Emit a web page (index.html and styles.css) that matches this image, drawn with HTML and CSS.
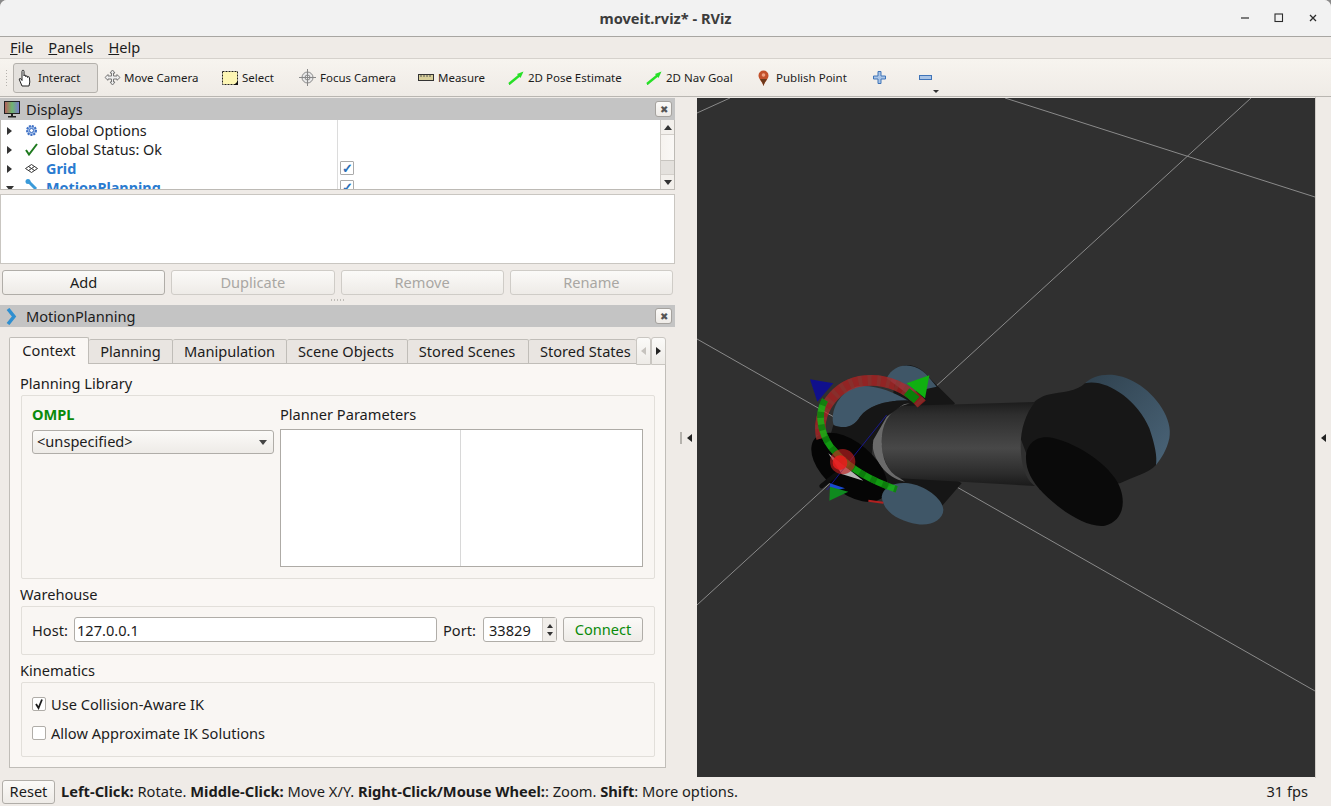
FILE: index.html
```html
<!DOCTYPE html>
<html lang="en">
<head>
<meta charset="utf-8">
<title>moveit.rviz* - RViz</title>
<link rel="stylesheet" href="styles.css">
</head>
<body>
<div class="window">
  <header class="titlebar">
    <div class="title">moveit.rviz* - RViz</div>
    <div class="winctl">
      <svg width="10" height="10" viewBox="0 0 10 10"><path d="M1 5h8" stroke="#2c2c2c" stroke-width="1.200"/></svg>
      <svg width="10" height="10" viewBox="0 0 10 10"><rect x="1" y="1" width="7.500" height="7.500" fill="none" stroke="#2c2c2c" stroke-width="1.100"/></svg>
      <svg width="10" height="10" viewBox="0 0 10 10"><path d="M2 2l6 6M8 2l-6 6" stroke="#2c2c2c" stroke-width="1.300"/></svg>
    </div>
  </header>
  <nav class="menubar">
    <span><u>F</u>ile</span><span><u>P</u>anels</span><span><u>H</u>elp</span>
  </nav>
  <div class="toolbar">
    <div class="grip"></div>
    <div class="tool active">
      <svg width="17" height="18" viewBox="0 0 17 18"><path d="M4 17l-2.500-6c-.8-1.500.6-2 1.500-1l1 1.500V2.500c0-1.800 2-1.800 2 0V7c0-1.300 1.800-1.300 1.800 0v.8c0-1.200 1.800-1.200 1.800 0v.7c0-1.100 1.800-1.100 1.800 0l.4 4.500-.8 4z" fill="#fff" stroke="#222" stroke-width="1"/></svg>
      <span>Interact</span>
    </div>
    <div class="tool tool-move">
      <svg width="17" height="17" viewBox="0 0 17 17"><path d="M8.500 1l2.500 3H9.500v3H13V5.500l3 3-3 2.800V10H9.500v3H11l-2.500 3L6 13h1.500v-3H4v1.300L1 8.500l3-3V7h3.500V4H6z" fill="#eee" stroke="#777" stroke-width="1"/></svg>
      <span>Move Camera</span>
    </div>
    <div class="tool tool-select">
      <svg width="16" height="14" viewBox="0 0 16 14"><rect x=".5" y=".5" width="15" height="13" fill="#fdf6b4" stroke="#222" stroke-dasharray="2 1"/><path d="M16 14h-4l4-4z" fill="#111"/></svg>
      <span>Select</span>
    </div>
    <div class="tool tool-focus">
      <svg width="17" height="17" viewBox="0 0 17 17"><circle cx="8.500" cy="8.500" r="5.500" fill="#e8e8e8" stroke="#888"/><circle cx="8.500" cy="8.500" r="2.500" fill="none" stroke="#888"/><path d="M8.500 0v17M0 8.500h17" stroke="#888"/></svg>
      <span>Focus Camera</span>
    </div>
    <div class="tool tool-measure">
      <svg width="16" height="7" viewBox="0 0 16 7"><rect x=".5" y=".5" width="15" height="6" fill="#d8cf9a" stroke="#333"/><path d="M3 1v2M6 1v2M9 1v2M12 1v2" stroke="#555"/></svg>
      <span>Measure</span>
    </div>
    <div class="tool tool-pose">
      <svg width="16" height="14" viewBox="0 0 16 14"><path d="M1 13.500L14 2" stroke="#0a8a0a" stroke-width="1"/><path d="M1 13L12 4" stroke="#27e027" stroke-width="2.400"/><path d="M15.500 .5L9 3l3.500 4z" fill="#27e027"/></svg>
      <span>2D Pose Estimate</span>
    </div>
    <div class="tool tool-nav">
      <svg width="16" height="14" viewBox="0 0 16 14"><path d="M1 13.500L14 2" stroke="#0a8a0a" stroke-width="1"/><path d="M1 13L12 4" stroke="#27e027" stroke-width="2.400"/><path d="M15.500 .5L9 3l3.500 4z" fill="#27e027"/></svg>
      <span>2D Nav Goal</span>
    </div>
    <div class="tool tool-pin">
      <svg width="11" height="16" viewBox="0 0 11 16"><path d="M5.500 16C4 11 .5 9 .5 5.500a5 5 0 0 1 10 0C10.500 9 7 11 5.500 16z" fill="#c3502a"/><path d="M5.500 16C4.500 12 3 11 2 9h7c-1 2-2.500 3-3.500 7z" fill="#6b3a1d"/><circle cx="5.500" cy="5" r="1.800" fill="#f0a080"/></svg>
      <span>Publish Point</span>
    </div>
    <div class="tool tool-plus">
      <svg width="13" height="13" viewBox="0 0 13 13"><path d="M5 .5h3V5h4.500v3H8v4.500H5V8H.5V5H5z" fill="#a9c4e6" stroke="#3f74b8"/></svg>
    </div>
    <div class="tool tool-minus">
      <svg width="13" height="6" viewBox="0 0 13 6"><rect x=".5" y=".5" width="12" height="4" fill="#a9c4e6" stroke="#3f74b8"/></svg>
      <i class="more"></i>
    </div>
  </div>

  <main class="main">
    <section class="dock">
      <div class="panel-head displays-head">
        <svg class="head-icon" width="16" height="17" viewBox="0 0 16 17"><defs><linearGradient id="mon"><stop offset="0" stop-color="#b85a5a"/><stop offset=".5" stop-color="#6fb56f"/><stop offset="1" stop-color="#7a7ad0"/></linearGradient></defs><rect x=".5" y=".5" width="15" height="12" fill="url(#mon)" stroke="#222"/><path d="M7 13h2v2H7zM4 15h8v1.500H4z" fill="#222"/></svg>
        <span class="grow">Displays</span>
        <button class="close-btn">✖</button>
      </div>
      <div class="tree">
        <div class="tree-col1">
          <div class="row"><i class="arrow"></i>
            <svg class="ricon" width="13" height="13" viewBox="0 0 13 13"><circle cx="6.500" cy="6.500" r="4.500" fill="#9dbbe8" stroke="#3f70c4" stroke-width="2" stroke-dasharray="2 1"/><circle cx="6.500" cy="6.500" r="2" fill="#fff" stroke="#3f70c4"/></svg>
            <span>Global Options</span></div>
          <div class="row"><i class="arrow"></i>
            <svg class="ricon" width="13" height="13" viewBox="0 0 13 13"><path d="M1 7l3 4.500L12 1" fill="none" stroke="#1f7a1f" stroke-width="2"/></svg>
            <span>Global Status: Ok</span></div>
          <div class="row"><i class="arrow"></i>
            <svg class="ricon" width="13" height="9" viewBox="0 0 13 9"><path d="M6.500.5l6 4-6 4-6-4zM3.500 2.500l6 4M9.500 2.500l-6 4" fill="none" stroke="#333"/></svg>
            <b class="blue">Grid</b></div>
          <div class="row"><i class="arrow open"></i>
            <svg class="ricon r-mp" width="13" height="13" viewBox="0 0 13 13"><path d="M3 2l8 8" stroke="#3a9ad9" stroke-width="3"/><circle cx="3" cy="2.500" r="2.500" fill="#3a9ad9"/></svg>
            <b class="blue">MotionPlanning</b></div>
        </div>
        <div class="tree-col2">
          <div class="row"></div>
          <div class="row"></div>
          <div class="row"><i class="cb">✓</i></div>
          <div class="row"><i class="cb">✓</i></div>
        </div>
        <div class="vscroll">
          <i class="sb-btn"><em class="up"></em></i>
          <i class="sb-track"><u class="sb-thumb"></u></i>
          <i class="sb-btn"><em class="down"></em></i>
        </div>
      </div>
      <div class="desc"></div>
      <div class="btn-row">
        <button class="btn">Add</button>
        <button class="btn off">Duplicate</button>
        <button class="btn off">Remove</button>
        <button class="btn off">Rename</button>
      </div>
      <div class="hsplit"></div>
      <div class="panel-head mp-head">
        <svg class="head-icon" width="14" height="17" viewBox="0 0 14 17"><path d="M2 1l6 7.500L2 16" fill="none" stroke="#2f8fd0" stroke-width="3.500"/></svg>
        <span class="grow">MotionPlanning</span>
        <button class="close-btn">✖</button>
      </div>
      <div class="tabs-wrap">
        <div class="tabbar">
          <div class="tab current">Context</div>
          <div class="tab t-plan">Planning</div>
          <div class="tab t-mani">Manipulation</div>
          <div class="tab t-scene">Scene Objects</div>
          <div class="tab t-stored">Stored Scenes</div>
          <div class="tab t-states">Stored States</div>
          <div class="tab-scroll"><i class="tri-l dim"></i></div>
          <div class="tab-scroll"><i class="tri-r"></i></div>
        </div>
        <div class="pane">
          <div class="gtitle">Planning Library</div>
          <div class="gbox g-lib">
            <div class="lib-left">
              <b class="ompl">OMPL</b>
              <div class="combo"><span>&lt;unspecified&gt;</span><i class="tri-d"></i></div>
            </div>
            <div class="lib-right">
              <div class="pp">Planner Parameters</div>
              <div class="ptable"><div class="pcell"></div><div class="pcell"></div></div>
            </div>
          </div>
          <div class="gtitle">Warehouse</div>
          <div class="gbox g-ware">
            <span class="host-l">Host:</span>
            <div class="input">127.0.0.1</div>
            <span class="port-l">Port:</span>
            <div class="spin"><span class="grow">33829</span><div class="spin-btns"><i class="tri-u-s"></i><i class="tri-d-s"></i></div></div>
            <button class="btn connect">Connect</button>
          </div>
          <div class="gtitle">Kinematics</div>
          <div class="gbox g-kin">
            <label class="check"><i class="box"><svg width="12" height="12" viewBox="0 0 12 12"><path d="M3 6l2.500 4L9 1.500" fill="none" stroke="#1c1c1c" stroke-width="1.800"/></svg></i>Use Collision-Aware IK</label>
            <label class="check"><i class="box"></i>Allow Approximate IK Solutions</label>
          </div>
        </div>
      </div>
    </section>

    <div class="vsplit"><i class="dots"></i><i class="tri-l"></i></div>

    <svg class="viewport" viewBox="697 98 618 679" preserveAspectRatio="none">
      <defs>
        <linearGradient id="cyl" x1="0" y1="0" x2="0" y2="1">
          <stop offset="0" stop-color="#1c1c1c"/><stop offset=".15" stop-color="#2e2e2e"/><stop offset=".55" stop-color="#484848"/><stop offset=".85" stop-color="#2c2c2c"/><stop offset="1" stop-color="#1a1a1a"/>
        </linearGradient>
        <linearGradient id="dome" x1="0" y1="0" x2="1" y2="1">
          <stop offset="0" stop-color="#2f414e"/><stop offset="1" stop-color="#4a6478"/>
        </linearGradient>
      </defs>
      <rect x="697" y="98" width="618" height="679" fill="#303030"/>
      <g stroke="#8a8a8a" stroke-width="1" fill="none">
        <path d="M697 339L1315 691"/>
        <path d="M697 605L1251 98"/>
        <path d="M697 113L730 98"/>
        <path d="M1005 98L1315 197"/>
      </g>
      <g transform="translate(780 350) scale(.33333)">
        <path d="M350 60C380 30 420 50 445 80L525 160L400 300L545 400L480 475L300 400Z" fill="#161616"/>
        <path d="M320 85C345 35 405 35 445 80L470 110L380 130Z" fill="#3f5667"/>
        <path d="M915 100C945 70 1010 62 1070 100C1130 135 1180 210 1168 265C1160 300 1145 325 1128 345L1060 230Z" fill="url(#dome)"/>
        <path d="M720 260C725 200 750 150 800 135C850 125 890 125 915 100C975 85 1070 145 1108 235C1125 285 1132 320 1128 345C1105 370 1060 380 1020 400L780 420Z" fill="#171717"/>
        <path d="M360 168L765 156C730 200 715 260 725 330C730 365 745 395 765 408L360 385C325 370 305 320 305 275C305 225 325 185 360 168Z" fill="url(#cyl)"/>
        <path d="M390 160C330 165 280 210 277 270C275 330 320 385 375 395L360 385C320 365 305 320 305 275C305 225 325 185 365 168Z" fill="#6a6a6a"/>
        <path d="M738 325C738 285 765 258 805 262C860 268 960 320 1005 385C1040 435 1040 510 975 527C920 535 840 480 790 430C755 395 738 360 738 325Z" fill="#0a0a0a"/>
        <path d="M160 222C150 170 190 115 240 108C290 105 340 125 385 152C310 150 265 170 240 200C220 235 170 245 160 222Z" fill="#40586a"/>
        <path d="M160 225C200 240 225 225 240 200C265 170 310 150 385 152L320 200L280 270L270 360L150 260Z" fill="#161616"/>
        <ellipse cx="208" cy="352" rx="135" ry="75" transform="rotate(40 208 352)" fill="#050505"/>
        <path d="M305 440C310 410 345 395 385 400C430 405 490 445 490 480C490 510 450 530 410 522C365 515 310 490 305 440Z" fill="#3f5667"/>
        <path d="M125 408L170 372" stroke="#0e0e0e" stroke-width="14" stroke-linecap="round"/>
        <path d="M145 310L250 392L185 372Z" fill="#b5b5b5"/>
        <path d="M140 420L320 195" stroke="#1a1ac8" stroke-width="2"/>
        <path d="M265 452L310 458" stroke="#b02020" stroke-width="6"/>
        <path d="M125 265C105 190 165 100 255 92C320 85 385 115 425 162" fill="none" stroke="#c81e1e" stroke-width="32" stroke-opacity=".65"/>
        <path d="M125 265C105 190 165 100 255 92C320 85 385 115 425 162" fill="none" stroke="#7d3a34" stroke-width="32" stroke-dasharray="12 16" stroke-opacity=".5"/>
        <path d="M135 150C105 200 130 270 165 305C205 355 280 395 350 418" fill="none" stroke="#14b414" stroke-width="20" stroke-opacity=".85"/>
        <path d="M135 150C105 200 130 270 165 305C205 355 280 395 350 418" fill="none" stroke="#0a6a0a" stroke-width="20" stroke-dasharray="18 20" stroke-opacity=".6"/>
        <path d="M90 88L160 100L112 155Z" fill="#10108c"/>
        <path d="M150 400L195 415L150 425Z" fill="#1a4ad0"/>
        <path d="M448 76L380 100L435 145Z" fill="#10b010"/>
        <path d="M148 452L150 410L205 425Z" fill="#0f8a1f"/>
        <path d="M380 125L410 150" stroke="#0a800a" stroke-width="26"/>
        <circle cx="188" cy="335" r="38" fill="#c02020" fill-opacity=".65"/>
        <circle cx="180" cy="338" r="22" fill="#ea1c1c" fill-opacity=".85"/>
      </g>
    </svg>

    <div class="rsplit"><i class="tri-l"></i></div>
  </main>

  <footer class="statusbar">
    <button class="btn reset">Reset</button>
    <div class="hint grow"><b>Left-Click:</b> Rotate. <b>Middle-Click:</b> Move X/Y. <b>Right-Click/Mouse Wheel:</b>: Zoom. <b>Shift</b>: More options.</div>
    <div class="fps">31 fps</div>
  </footer>
</div>
</body>
</html>
```
FILE: styles.css
```css
* { box-sizing: border-box; }
html, body { margin: 0; height: 100%; }
body { background: #8a8a8a; overflow: hidden; font-family: "Noto Sans", sans-serif; font-size: 14.600px; color: #1c1c1c; }
i, em, u.sb-thumb { font-style: normal; display: block; }
button { font: inherit; color: inherit; padding: 0; }
.grow { flex: 1 1 0; min-width: 0; }

.window { width: 1331px; height: 806px; display: flex; flex-direction: column; background: #efebe7; border-radius: 7px 7px 0 0; overflow: hidden; }

.titlebar { height: 37px; flex: none; background: #f2f2f2; border-bottom: 1px solid #a8a6a2; display: flex; align-items: center; position: relative; }
.title { flex: 1; text-align: center; font-weight: 700; font-size: 14.600px; color: #3c3c3c; }
.winctl { position: absolute; right: 13px; top: 13px; display: flex; gap: 24px; width: 78px; }
.winctl svg { flex: none; }

.menubar { height: 22px; flex: none; display: flex; align-items: center; gap: 15px; padding: 0 0 2px 10px; background: #efebe7; border-bottom: 1px solid #d5d1cc; }

.toolbar { height: 38px; flex: none; display: flex; align-items: center; background: linear-gradient(#f7f4ef, #efebe6); border-bottom: 1px solid #b9b6b1; font-size: 11.500px; padding-left: 5px; }
.grip { width: 3px; height: 18px; margin-right: 5px; background-image: radial-gradient(#b5b2ad 1px, transparent 1px); background-size: 3px 3px; }
.tool { display: flex; align-items: center; gap: 4px; height: 30px; flex: none; position: relative; white-space: nowrap; }
.tool.active { width: 85px; gap: 3px; padding-left: 4px; background: #e4e1dd; border: 1px solid #b4b1ac; border-radius: 3px; margin-right: 6px; }
.tool-move { width: 118px; gap: 3px; }
.tool-select { width: 77px; }
.tool-focus { width: 119px; }
.tool-measure { width: 90px; }
.tool-pose { width: 138px; }
.tool-nav { width: 112px; }
.tool-pin { width: 115px; gap: 7px; }
.tool-plus { width: 46px; }
.tool-minus { width: 20px; }
.more { position: absolute; right: 0; bottom: 0; border: 3px solid transparent; border-top: 3px solid #333; border-bottom-width: 0; }

.main { flex: 1 1 0; min-height: 0; display: flex; }
.dock { width: 675px; flex: none; display: flex; flex-direction: column; }
.vsplit { width: 22px; flex: none; display: flex; align-items: center; justify-content: center; gap: 5px; }
.dots { width: 2px; height: 12px; background-image: radial-gradient(#b5b2ad 1px, transparent 1px); background-size: 2px 3px; }
.viewport { width: 618px; height: 679px; flex: none; margin-top: 1px; display: block; }
.rsplit { flex: 1; display: flex; align-items: center; justify-content: center; border-left: 1px solid #d0ccc7; }
.tri-l { border: 4px solid transparent; border-right: 5px solid #222; border-left-width: 0; width: 0; height: 0; }
.tri-r { border: 4px solid transparent; border-left: 5px solid #222; border-right-width: 0; width: 0; height: 0; }
.tri-l.dim { border-right-color: #c6c3be; }

.panel-head { height: 22px; flex: none; display: flex; align-items: center; background: #c4c4c4; padding: 0 3px 0 4px; gap: 6px; }
.displays-head { margin-top: 1px; }
.mp-head { padding-left: 6px; gap: 6px; }
.close-btn { width: 17px; height: 16px; border: 1px solid #a5a29e; border-radius: 3px; background: linear-gradient(#fbfaf8, #eeebe7); font-size: 10px; line-height: 13px; color: #555; text-align: center; }

.tree { height: 70px; flex: none; display: flex; overflow: hidden; background: #fff; border: 1px solid #bdbab5; border-width: 0 1px 1px 1px; font-size: 14.400px; }
.tree-col1 { width: 337px; flex: none; border-right: 1px solid #dcdcdc; }
.tree-col2 { flex: 1; }
.row { height: 19px; display: flex; align-items: center; position: relative; flex: none; }
.row:first-child { margin-top: 1px; }
.arrow { width: 0; height: 0; margin-left: 6px; border: 4px solid transparent; border-left: 5px solid #333; border-right-width: 0; }
.arrow.open { margin-left: 5px; margin-right: -2px; margin-top: 2px; border: 4px solid transparent; border-top: 5px solid #333; border-bottom-width: 0; }
.ricon { margin-left: 13px; margin-right: 8px; width: 13px; flex: none; }
.r-mp { margin-top: -5px; }
.blue { color: #2a7bd0; }
.cb { width: 14px; height: 14px; margin-left: 2px; margin-top: -1px; border: 1px solid #aaa; background: #fff; color: #2a6fb8; font-size: 13px; line-height: 12px; text-align: center; font-weight: 700; border-radius: 1px; }
.vscroll { width: 14px; flex: none; display: flex; flex-direction: column; border-left: 1px solid #cfcbc6; }
.sb-btn { height: 14px; flex: none; display: flex; align-items: center; justify-content: center; background: #f3f0ec; }
.sb-track { flex: 1; background: linear-gradient(90deg, #f6f3ef, #faf8f6); border-top: 1px solid #d4d0cb; border-bottom: 1px solid #d4d0cb; display: flex; flex-direction: column; justify-content: flex-end; }
.sb-thumb { height: 14px; background: #e4e1dd; border-top: 1px solid #c8c5c0; text-decoration: none; }
.up { width: 0; height: 0; border: 4px solid transparent; border-bottom: 5px solid #333; border-top-width: 0; }
.down { width: 0; height: 0; border: 4px solid transparent; border-top: 5px solid #333; border-bottom-width: 0; }

.desc { height: 70px; flex: none; margin-top: 4px; background: #fff; border: 1px solid #c9c6c1; }
.btn-row { display: flex; gap: 6px; padding: 6px 2px 0; height: 31px; flex: none; }
.btn-row .btn { flex: 1 1 0; }
.btn { border: 1px solid #b0ada8; border-radius: 3px; background: linear-gradient(#fbfaf8, #eeebe7); height: 25px; text-align: center; padding-bottom: 2px; }
.btn.off { color: #a9a7a3; border-color: #cfccc7; }
.hsplit { height: 10px; flex: none; display: flex; align-items: center; justify-content: center; }
.hsplit::after { content: ""; width: 15px; height: 2px; background: radial-gradient(#b5b2ad .7px, transparent 1px) 0 0 / 3px 2px repeat-x; }

.tabs-wrap { flex: 1 1 0; min-height: 0; padding: 10px 9px 0; display: flex; flex-direction: column; }
.tabbar { display: flex; align-items: flex-end; height: 27px; flex: none; position: relative; z-index: 1; margin-bottom: -1px; }
.tab { height: 25px; flex: none; background: #e9e5e1; border: 1px solid #c0bdb8; border-left: none; border-radius: 2px 2px 0 0; display: flex; align-items: center; justify-content: center; padding-bottom: 2px; }
.tab.current { width: 80px; height: 27px; background: #faf7f4; border: 1px solid #c0bdb8; border-bottom: none; }
.t-plan { width: 84px; }
.t-mani { width: 114px; }
.t-scene { width: 121px; padding-right: 2px; }
.t-stored { width: 121px; padding-right: 2px; }
.t-states { width: 107px; border-right: none; justify-content: flex-start; padding-left: 11px; }
.tab-scroll { width: 15px; height: 28px; margin-bottom: -1px; display: flex; align-items: center; justify-content: center; background: linear-gradient(#fbfaf8, #eeebe7); border: 1px solid #c9c6c1; border-radius: 3px 3px 0 0; }

.pane { height: 405px; flex: none; width: 657px; background: #faf7f4; border: 1px solid #c0bdb8; padding: 9px 11px 9px; display: flex; flex-direction: column; }
.gtitle { height: 22px; flex: none; display: flex; align-items: center; margin-left: -1px; padding-bottom: 2px; }
.gbox { background: #f9f6f3; border: 1px solid #e2dfda; border-radius: 2px; flex: none; width: 634px; }
.g-lib { height: 184px; display: flex; gap: 6px; padding: 10px 11px 0 10px; margin-bottom: 5px; }
.lib-left { width: 242px; flex: none; }
.ompl { display: block; color: #0a8a0a; height: 22px; line-height: 16px; }
.combo { height: 24px; margin-top: 2px; border: 1px solid #b0ada8; border-radius: 3px; background: linear-gradient(#fbfaf8, #eeebe7); display: flex; align-items: center; justify-content: space-between; padding: 0 6px 2px 4px; }
.tri-d { width: 0; height: 0; border: 4px solid transparent; border-top: 5px solid #444; border-bottom-width: 0; margin-top: 2px; }
.lib-right { flex: 1; }
.pp { height: 23px; line-height: 16px; }
.ptable { height: 138px; background: #fff; border: 1px solid #aeaba6; display: flex; }
.pcell { width: 180px; border-right: 1px solid #d8d8d8; }
.pcell:last-child { border: none; flex: 1; }
.g-ware { height: 49px; display: flex; align-items: center; gap: 6px; padding: 0 11px 2px 10px; margin-bottom: 5px; white-space: nowrap; }
.host-l { width: 36px; flex: none; }
.port-l { width: 34px; flex: none; }
.input { width: 363px; flex: none; height: 25px; background: #fff; border: 1px solid #b0ada8; border-radius: 3px; display: flex; align-items: center; padding-left: 2px; }
.spin { width: 74px; height: 25px; flex: none; display: flex; align-items: center; background: #fff; border: 1px solid #b0ada8; border-radius: 3px; padding-left: 5px; }
.spin-btns { width: 14px; height: 100%; border-left: 1px solid #d0ccc7; background: #f1eeea; display: flex; flex-direction: column; justify-content: center; align-items: center; gap: 4px; }
.tri-u-s { width: 0; height: 0; border: 3.500px solid transparent; border-bottom: 4px solid #333; border-top-width: 0; }
.tri-d-s { width: 0; height: 0; border: 3.500px solid transparent; border-top: 4px solid #333; border-bottom-width: 0; }
.connect { width: 80px; flex: none; color: #0a8a0a; }
.g-kin { height: 75px; padding: 10px 10px 0; display: flex; flex-direction: column; gap: 7px; }
.check { display: flex; align-items: center; gap: 5px; height: 22px; }
.box { width: 14px; height: 14px; flex: none; border: 1px solid #b0ada8; border-radius: 2px; background: #fff; display: flex; }

.statusbar { height: 28px; flex: none; display: flex; align-items: center; padding: 0 23px 0 2px; gap: 6px; }
.reset { width: 53px; height: 24px; }
.hint { white-space: nowrap; padding-bottom: 2px; font-size: 14.660px; }
.fps { flex: none; padding-bottom: 2px; }
```
